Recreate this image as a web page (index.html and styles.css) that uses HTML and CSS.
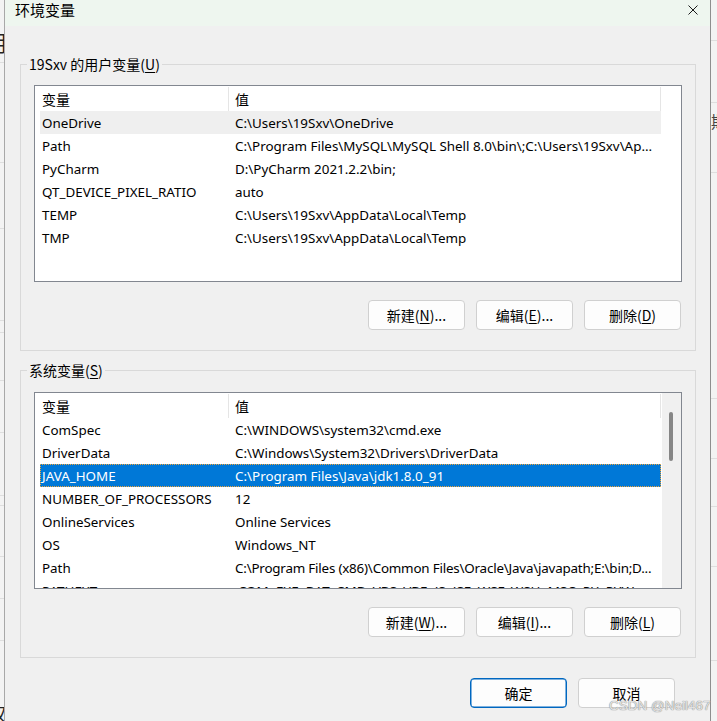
FILE: index.html
```html
<!DOCTYPE html>
<html lang="zh-CN">
<head>
<meta charset="utf-8">
<title>环境变量</title>
<link rel="stylesheet" href="styles.css">
</head>
<body>
<div class="screen">
  <div class="bg-left">
    <span class="frag frag-l1">用</span>
    <span class="frag frag-l2">权</span>
    <i class="hline" style="top:62px"></i>
    <i class="hline" style="top:162px"></i>
    <i class="hline" style="top:228px"></i>
    <i class="hline" style="top:320px"></i>
    <i class="hline" style="top:332px"></i>
    <i class="hline" style="top:380px"></i>
    <i class="hline" style="top:432px"></i>
    <i class="hline" style="top:495px"></i>
    <i class="hline" style="top:505px"></i>
    <i class="hline" style="top:556px"></i>
    <i class="hline" style="top:598px"></i>
    <i class="hline" style="top:640px"></i>
  </div>
  <div class="dialog">
    <div class="titlebar">
      <span class="title">环境变量</span>
      <svg class="close" width="10" height="10" viewBox="0 0 10 10"><path d="M0.5 0.5 L9.5 9.5 M9.5 0.5 L0.5 9.5" stroke="#1a1a1a" stroke-width="1" fill="none"/></svg>
    </div>
    <div class="body">
      <fieldset class="group group-user">
        <legend>19Sxv 的用户变量(<u>U</u>)</legend>
        <div class="lv">
          <div class="lv-main">
            <div class="lv-header">
              <div class="hc c1">变量</div>
              <div class="hc c2">值</div>
            </div>
            <div class="row hover"><span class="c1">OneDrive</span><span class="c2">C:\Users\19Sxv\OneDrive</span></div>
            <div class="row"><span class="c1">Path</span><span class="c2">C:\Program Files\MySQL\MySQL Shell 8.0\bin\;C:\Users\19Sxv\Ap...</span></div>
            <div class="row"><span class="c1">PyCharm</span><span class="c2">D:\PyCharm 2021.2.2\bin;</span></div>
            <div class="row"><span class="c1">QT_DEVICE_PIXEL_RATIO</span><span class="c2">auto</span></div>
            <div class="row"><span class="c1">TEMP</span><span class="c2">C:\Users\19Sxv\AppData\Local\Temp</span></div>
            <div class="row"><span class="c1">TMP</span><span class="c2">C:\Users\19Sxv\AppData\Local\Temp</span></div>
          </div>
        </div>
        <div class="btn-row">
          <div class="btn">新建(<u>N</u>)...</div>
          <div class="btn">编辑(<u>E</u>)...</div>
          <div class="btn">删除(<u>D</u>)</div>
        </div>
      </fieldset>

      <fieldset class="group group-sys">
        <legend>系统变量(<u>S</u>)</legend>
        <div class="lv">
          <div class="lv-main">
            <div class="lv-header">
              <div class="hc c1">变量</div>
              <div class="hc c2">值</div>
            </div>
            <div class="row"><span class="c1">ComSpec</span><span class="c2">C:\WINDOWS\system32\cmd.exe</span></div>
            <div class="row"><span class="c1">DriverData</span><span class="c2">C:\Windows\System32\Drivers\DriverData</span></div>
            <div class="row selected"><span class="c1">JAVA_HOME</span><span class="c2">C:\Program Files\Java\jdk1.8.0_91</span></div>
            <div class="row"><span class="c1">NUMBER_OF_PROCESSORS</span><span class="c2">12</span></div>
            <div class="row"><span class="c1">OnlineServices</span><span class="c2">Online Services</span></div>
            <div class="row"><span class="c1">OS</span><span class="c2">Windows_NT</span></div>
            <div class="row"><span class="c1">Path</span><span class="c2 tight">C:\Program Files (x86)\Common Files\Oracle\Java\javapath;E:\bin;D...</span></div>
            <div class="row"><span class="c1">PATHEXT</span><span class="c2">.COM;.EXE;.BAT;.CMD;.VBS;.VBE;.JS;.JSE;.WSF;.WSH;.MSC;.PY;.PYW</span></div>
          </div>
          <div class="vscroll"><div class="thumb"></div></div>
        </div>
        <div class="btn-row">
          <div class="btn">新建(<u>W</u>)...</div>
          <div class="btn">编辑(<u>I</u>)...</div>
          <div class="btn">删除(<u>L</u>)</div>
        </div>
      </fieldset>

      <div class="footer">
        <div class="btn default">确定</div>
        <div class="btn">取消</div>
      </div>
    </div>
  </div>
  <div class="bg-right">
    <span class="frag frag-r1">期</span>
    <i class="hline" style="top:40px"></i>
    <i class="hline" style="top:102px"></i>
    <i class="hline" style="top:172px"></i>
    <i class="hline" style="top:398px"></i>
    <i class="hline" style="top:458px"></i>
    <i class="hline" style="top:506px"></i>
    <i class="hline" style="top:566px"></i>
    <i class="hline" style="top:660px"></i>
  </div>
</div>
<div class="watermark">CSDN @Neil467</div>
</body>
</html>
```

FILE: styles.css
```css
* { box-sizing: border-box; }

body {
  margin: 0;
  width: 717px;
  height: 721px;
  overflow: hidden;
  background: #f0f0f0;
  font-family: "Noto Sans", "Noto Sans CJK SC", sans-serif;
  color: #000;
}

.screen {
  display: flex;
  height: 721px;
}

.bg-left {
  position: relative;
  width: 5px;
  background: #f3f3f3;
  border-right: 1px solid #a8a8a8;
  overflow: hidden;
}

.bg-right {
  position: relative;
  width: 7px;
  background: #f3f3f3;
  border-left: 1px solid #8e8e8e;
  overflow: hidden;
}

.hline {
  position: absolute;
  left: 0;
  right: 0;
  height: 1px;
  background: #dedede;
}

.frag {
  position: absolute;
  font-family: "Noto Sans CJK SC", sans-serif;
  font-size: 22px;
  line-height: 22px;
  color: #222;
}
.frag-l1 { top: 30px; left: -15px; }
.frag-l2 { top: 702px; left: -12px; font-size: 18px; }
.frag-r1 { top: 110px; left: 0; font-size: 16px; color: #444; }

.dialog {
  width: 705px;
  background: #f0f0f0;
  display: flex;
  flex-direction: column;
}

.titlebar {
  height: 26px;
  background: #eef6ef;
  display: flex;
  align-items: flex-start;
  padding-left: 10px;
}

.title {
  font-family: "Noto Sans CJK SC", sans-serif;
  font-size: 15px;
  line-height: 20px;
}

.close {
  margin-left: auto;
  margin-right: 12px;
  margin-top: 5px;
}

.body {
  padding: 0 14px 0 15px;
}

.group {
  margin: 0;
  min-width: 0;
  border: 1px solid #d9d9d9;
  padding: 11px 13px 20px 13px;
}

.group-user { margin-top: 28px; }
.group-sys { margin-top: 9px; padding-top: 12px; }

.group legend {
  font-family: "Noto Sans CJK SC", sans-serif;
  font-size: 14px;
  line-height: 20px;
  padding: 0 2px;
  margin-left: -7px;
}

u { text-decoration: underline; text-underline-offset: 2px; }

.lv {
  height: 197px;
  border: 1px solid #828790;
  background: #fff;
  display: flex;
  overflow: hidden;
}

.lv-main {
  flex: 1;
  padding-left: 5px;
  overflow: hidden;
}

.lv-header {
  height: 25px;
  display: flex;
}

.hc {
  margin-top: 1px;
  height: 24px;
  line-height: 24px;
  font-family: "Noto Sans CJK SC", sans-serif;
  font-size: 14px;
  border-right: 1px solid #e5e5e5;
}

.c1 {
  width: 189px;
  flex: none;
  padding-left: 2px;
  white-space: nowrap;
  overflow: hidden;
}

.c2 {
  width: 432px;
  flex: none;
  padding-left: 6px;
  white-space: nowrap;
  overflow: hidden;
}

.c2.tight { letter-spacing: -0.2px; }

.row {
  width: 621px;
  height: 23px;
  line-height: 24px;
  display: flex;
  font-size: 13.4px;
}

.row .c1, .row .c2 { border: 0; }

.row.hover { background: #efefef; }

.row.selected {
  background: #0078d7;
  color: #fff;
  outline: 1px dotted #f0a43a;
  outline-offset: -1px;
}

.vscroll {
  width: 19px;
  flex: none;
  background: #f0f0f0;
  padding: 19px 0 0 7px;
}

.thumb {
  width: 4px;
  height: 49px;
  border-radius: 2px;
  background: #868686;
}

.btn-row {
  display: flex;
  justify-content: flex-end;
  gap: 11px;
  margin-top: 18px;
  padding-right: 1px;
}

.btn {
  width: 97px;
  height: 30px;
  border: 1px solid #d0d0d0;
  border-radius: 4px;
  background: #fdfdfd;
  display: flex;
  align-items: center;
  justify-content: center;
  font-family: "Noto Sans CJK SC", sans-serif;
  font-size: 14px;
}

.btn.default {
  border-color: #0067c0;
  box-shadow: inset 0 0 0 0.5px #0067c0;
}

.footer {
  display: flex;
  justify-content: flex-end;
  gap: 11px;
  margin-top: 20px;
  padding-right: 21px;
}

.watermark {
  position: absolute;
  left: 609px;
  top: 697px;
  white-space: nowrap;
  font-family: "Liberation Sans", sans-serif;
  font-size: 13.5px;
  line-height: 18px;
  color: rgba(238, 238, 238, 0.9);
  text-shadow: 0 0 1px #8a8a8a, 0 0 1px #8a8a8a;
}
```
